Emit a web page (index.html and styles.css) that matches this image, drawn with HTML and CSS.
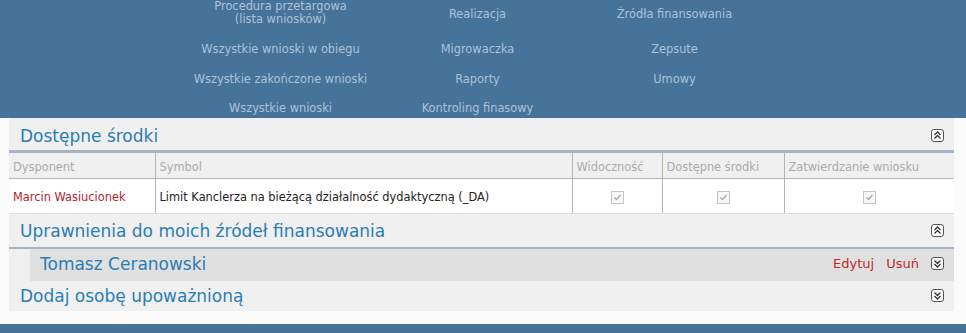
FILE: index.html
```html
<!DOCTYPE html>
<html lang="pl">
<head>
<meta charset="utf-8">
<title>Dostępne środki</title>
<link rel="stylesheet" href="styles.css">
</head>
<body>
<header class="topbar">
  <nav class="menu">
    <a class="menu-item menu-item-double">Procedura przetargowa<br>(lista wniosków)</a>
    <a class="menu-item">Realizacja</a>
    <a class="menu-item">Źródła finansowania</a>
    <a class="menu-item">Wszystkie wnioski w obiegu</a>
    <a class="menu-item">Migrowaczka</a>
    <a class="menu-item">Zepsute</a>
    <a class="menu-item">Wszystkie zakończone wnioski</a>
    <a class="menu-item">Raporty</a>
    <a class="menu-item">Umowy</a>
    <a class="menu-item">Wszystkie wnioski</a>
    <a class="menu-item">Kontroling finasowy</a>
  </nav>
</header>

<main class="content">
  <section class="panel">
    <div class="panel-head panel-head-thick">
      <h2 class="panel-title">Dostępne środki</h2>
      <span class="toggle">
        <svg viewBox="0 0 13 13" width="13" height="13"><rect x="0.5" y="0.5" width="12" height="12" rx="2.5" fill="#fff" stroke="#555"/><path d="M3.5 6 L6.5 3 L9.5 6 M3.5 9.5 L6.5 6.5 L9.5 9.5" fill="none" stroke="#333" stroke-width="1.3"/></svg>
      </span>
    </div>
    <table class="grid">
      <thead>
        <tr>
          <th class="c-disp">Dysponent</th>
          <th class="c-sym">Symbol</th>
          <th class="c-vis">Widoczność</th>
          <th class="c-avail">Dostępne środki</th>
          <th class="c-appr">Zatwierdzanie wniosku</th>
        </tr>
      </thead>
      <tbody>
        <tr>
          <td class="person">Marcin Wasiucionek</td>
          <td>Limit Kanclerza na bieżącą działalność dydaktyczną (_DA)</td>
          <td class="center"><span class="check"><svg viewBox="0 0 13 13" width="13" height="13"><rect x="0.5" y="0.5" width="12" height="12" fill="#f7f7f7" stroke="#c4c4c4"/><path d="M3.5 6.5 L5.5 8.5 L9.5 4" fill="none" stroke="#a9a9a9" stroke-width="1.3"/></svg></span></td>
          <td class="center"><span class="check"><svg viewBox="0 0 13 13" width="13" height="13"><rect x="0.5" y="0.5" width="12" height="12" fill="#f7f7f7" stroke="#c4c4c4"/><path d="M3.5 6.5 L5.5 8.5 L9.5 4" fill="none" stroke="#a9a9a9" stroke-width="1.3"/></svg></span></td>
          <td class="center"><span class="check"><svg viewBox="0 0 13 13" width="13" height="13"><rect x="0.5" y="0.5" width="12" height="12" fill="#f7f7f7" stroke="#c4c4c4"/><path d="M3.5 6.5 L5.5 8.5 L9.5 4" fill="none" stroke="#a9a9a9" stroke-width="1.3"/></svg></span></td>
        </tr>
      </tbody>
    </table>
  </section>

  <section class="panel">
    <div class="panel-head panel-head-thin">
      <h2 class="panel-title">Uprawnienia do moich źródeł finansowania</h2>
      <span class="toggle">
        <svg viewBox="0 0 13 13" width="13" height="13"><rect x="0.5" y="0.5" width="12" height="12" rx="2.5" fill="#fff" stroke="#555"/><path d="M3.5 6 L6.5 3 L9.5 6 M3.5 9.5 L6.5 6.5 L9.5 9.5" fill="none" stroke="#333" stroke-width="1.3"/></svg>
      </span>
    </div>
    <div class="sub-row">
      <h3 class="sub-title">Tomasz Ceranowski</h3>
      <div class="actions">
        <a class="action">Edytuj</a>
        <a class="action">Usuń</a>
        <span class="toggle">
          <svg viewBox="0 0 13 13" width="13" height="13"><rect x="0.5" y="0.5" width="12" height="12" rx="2.5" fill="#fff" stroke="#555"/><path d="M3.5 3.5 L6.5 6.5 L9.5 3.5 M3.5 7 L6.5 10 L9.5 7" fill="none" stroke="#333" stroke-width="1.3"/></svg>
        </span>
      </div>
    </div>
    <div class="panel-head panel-head-last">
      <h2 class="panel-title">Dodaj osobę upoważnioną</h2>
      <span class="toggle">
        <svg viewBox="0 0 13 13" width="13" height="13"><rect x="0.5" y="0.5" width="12" height="12" rx="2.5" fill="#fff" stroke="#555"/><path d="M3.5 3.5 L6.5 6.5 L9.5 3.5 M3.5 7 L6.5 10 L9.5 7" fill="none" stroke="#333" stroke-width="1.3"/></svg>
      </span>
    </div>
  </section>
</main>

<footer class="bottombar"></footer>
</body>
</html>
```

FILE: styles.css
```css
* { box-sizing: border-box; }

html, body {
  margin: 0;
  padding: 0;
  background: #fbfbfb;
  font-family: "DejaVu Sans", Verdana, sans-serif;
}

.topbar {
  height: 118px;
  padding-top: 2px;
  background: #46739a;
}

.menu {
  margin-left: 182px;
  width: 591px;
  display: grid;
  grid-template-columns: repeat(3, 197px);
  row-gap: 17px;
  align-items: center;
}

.menu-item {
  text-align: center;
  color: #adc2d6;
  font-size: 11.4px;
  line-height: 12.5px;
  white-space: nowrap;
  cursor: pointer;
}

.menu-item-double {
  line-height: 13px;
  margin-top: -2px;
}

.content {
  margin: 0 12px 0 9px;
  background: #f0f0f0;
}

.panel-head {
  display: flex;
  align-items: center;
  justify-content: space-between;
  height: 32px;
  padding: 0 10px 0 11px;
}

.panel-head-thick {
  height: 35px;
  padding-top: 3px;
  border-bottom: 3px solid #a8b4c6;
}

.panel-head-thin {
  height: 35px;
  padding-top: 1px;
  border-bottom: 2px solid #a8b4c6;
}

.panel-head-last {
  height: 30px;
}

.panel-title {
  margin: 0;
  font-weight: normal;
  font-size: 17px;
  color: #2a7db5;
}

.toggle {
  display: flex;
  width: 13px;
  height: 13px;
}

.grid {
  width: 100%;
  border-collapse: collapse;
  font-size: 11.4px;
}

.grid th {
  height: 25px;
  padding: 3px 4px 0;
  text-align: left;
  font-weight: normal;
  color: #ababab;
  background: #f0f0f0;
  border-left: 1px solid #b8b4aa;
  border-bottom: 1px solid #b8b4aa;
}

.grid td {
  height: 35px;
  padding: 2px 4px 0;
  background: #fff;
  color: #222;
  border-left: 1px solid #b8b4aa;
  border-bottom: 1px solid #dedede;
}

.grid th:first-child, .grid td:first-child { border-left: none; }

.c-disp { width: 146px; }
.c-sym { width: 417px; }
.c-vis { width: 90px; }
.c-avail { width: 122px; }

.grid td.person { color: #b3232b; }

.center { text-align: center; }

.check {
  display: inline-flex;
  vertical-align: middle;
}

.sub-row {
  margin-left: 21px;
  height: 32px;
  background: #e0e0e0;
  display: flex;
  align-items: center;
  justify-content: space-between;
  padding: 0 10px 2px 10px;
}

.sub-title {
  margin: 0;
  font-weight: normal;
  font-size: 17px;
  color: #2a7db5;
}

.actions {
  display: flex;
  align-items: center;
}

.action {
  color: #c1272d;
  font-size: 13px;
  margin-right: 12px;
  cursor: pointer;
}

.bottombar {
  margin-top: 13px;
  height: 10px;
  background: #46739a;
}
```
